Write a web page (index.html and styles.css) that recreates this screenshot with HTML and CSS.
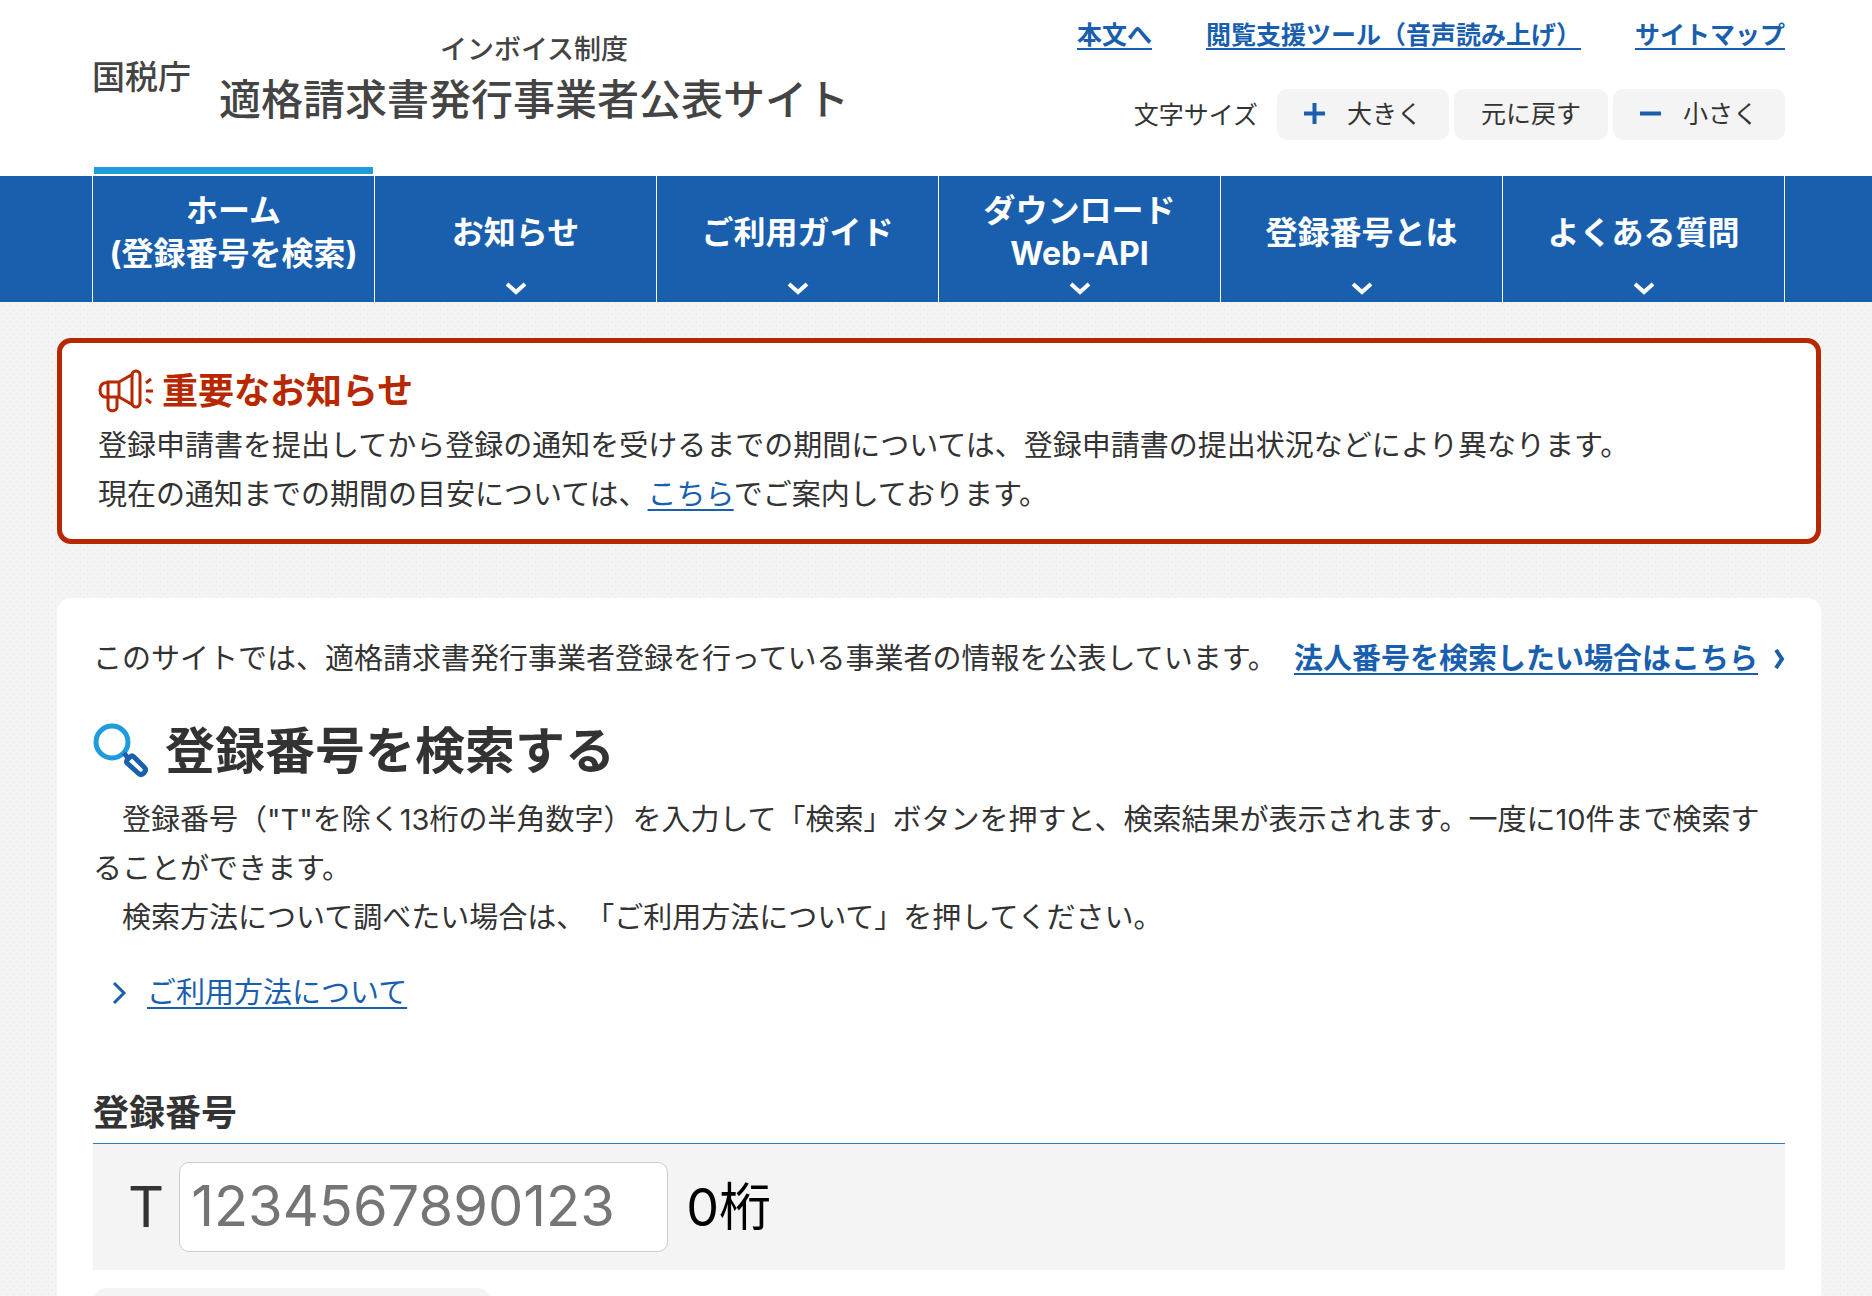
FILE: index.html
```html
<!DOCTYPE html>
<html lang="ja">
<head>
  <meta charset="UTF-8" />
  <title>国税庁インボイス制度適格請求書発行事業者公表サイト</title>
  <link rel="stylesheet" href="styles.css">
</head>
<body>
  <header class="header inner">
    <div class="logo">
      <span class="logo-agency">国税庁</span>
      <h1 class="logo-title"><span class="logo-sub">インボイス制度</span>適格請求書発行事業者公表サイト</h1>
    </div>
    <div class="header-tools">
      <div class="header-links">
        <a href="#main">本文へ</a>
        <a href="#">閲覧支援ツール（音声読み上げ）</a>
        <a href="#">サイトマップ</a>
      </div>
      <div class="font-size">
        <span class="font-size-label">文字サイズ</span>
        <button type="button"><svg width="21" height="21" viewBox="0 0 21 21"><path d="M0 10.5h21M10.5 0v21" /></svg>大きく</button>
        <button type="button">元に戻す</button>
        <button type="button"><svg width="21" height="21" viewBox="0 0 21 21"><path d="M0 10.5h21" /></svg>小さく</button>
      </div>
    </div>
  </header>

  <nav class="gnav">
    <ul class="gnav-list">
      <li class="current"><a href="#">ホーム<br>(登録番号を検索)</a></li>
      <li><a href="#">お知らせ<svg class="arrow" width="22" height="14" viewBox="0 0 22 14"><path d="M2 2l9 8 9-8" /></svg></a></li>
      <li><a href="#">ご利用ガイド<svg class="arrow" width="22" height="14" viewBox="0 0 22 14"><path d="M2 2l9 8 9-8" /></svg></a></li>
      <li><a href="#">ダウンロード<br>Web-API<svg class="arrow" width="22" height="14" viewBox="0 0 22 14"><path d="M2 2l9 8 9-8" /></svg></a></li>
      <li><a href="#">登録番号とは<svg class="arrow" width="22" height="14" viewBox="0 0 22 14"><path d="M2 2l9 8 9-8" /></svg></a></li>
      <li><a href="#">よくある質問<svg class="arrow" width="22" height="14" viewBox="0 0 22 14"><path d="M2 2l9 8 9-8" /></svg></a></li>
    </ul>
  </nav>

  <main id="main" class="main">
    <section class="notice">
      <h2 class="notice-title">
        <svg width="56" height="44" viewBox="0 0 56 44">
          <path d="M10 13H21V28H10zM10 14C4 13 2 17 2 21s2 8 8 7M21 13L35 5M21 28L35 36M10 28V38c0 5 9 5 9 0V28" />
          <rect x="34" y="2" width="8" height="36" rx="4" />
          <path d="M48 14l5-4M48 22h7M48 30l5 4" />
        </svg>
        重要なお知らせ
      </h2>
      <p>登録申請書を提出してから登録の通知を受けるまでの期間については、登録申請書の提出状況などにより異なります。<br>
      現在の通知までの期間の目安については、<a href="#">こちら</a>でご案内しております。</p>
    </section>

    <section class="card">
      <div class="intro">
        <p>このサイトでは、適格請求書発行事業者登録を行っている事業者の情報を公表しています。</p>
        <div class="intro-link">
          <a href="#">法人番号を検索したい場合はこちら</a>
          <svg width="11" height="20" viewBox="0 0 11 20"><path d="M2 1l6 9-6 9" /></svg>
        </div>
      </div>

      <h2 class="search-title">
        <svg width="56" height="56" viewBox="0 0 56 56">
          <circle class="lens" cx="19" cy="19" r="16" />
          <path class="handle" d="M31 30l4 5M34 37l3-3q2-2 4 0l10 10q3 3 0 6t-6 0L34 40q-1-1 0-3z" />
        </svg>
        登録番号を検索する
      </h2>
      <p>　登録番号（"T"を除く13桁の半角数字）を入力して「検索」ボタンを押すと、検索結果が表示されます。一度に10件まで検索することができます。<br>
      　検索方法について調べたい場合は、「ご利用方法について」を押してください。</p>

      <div class="usage">
        <svg width="15" height="22" viewBox="0 0 15 22"><path d="M2 1l10 10L2 21" /></svg>
        <a href="#">ご利用方法について</a>
      </div>

      <form class="search-form">
        <label class="form-title" for="number">登録番号</label>
        <div class="form-row">
          <span>T</span>
          <input type="text" id="number" placeholder="1234567890123" maxlength="13">
          <span class="count">0桁</span>
        </div>
        <button type="button" class="form-button"></button>
      </form>
    </section>
  </main>
</body>
</html>
```
FILE: styles.css
```css
* {
  box-sizing: border-box;
}
body {
  margin: 0;
  height: 100vh;
  overflow: hidden;
  background: #fff;
  color: #333;
  font-family: Inter, "Noto Sans CJK JP", sans-serif;
  font-size: 29px;
  line-height: 49px;
  text-spacing-trim: space-all;
}
h1, h2, p, ul {
  margin: 0;
  padding: 0;
}
a {
  color: #1a5fae;
  text-decoration-thickness: 2px;
  text-underline-offset: 4px;
}
svg {
  flex: none;
  fill: none;
  stroke: #1a5fae;
  stroke-width: 3;
}

/* ヘッダー */
.header {
  display: flex;
  justify-content: space-between;
  margin: 0 87px 0 92px;
  height: 176px;
}
.logo {
  display: flex;
  align-items: flex-start;
  gap: 28px;
  padding-top: 30px;
  color: #444;
}
.logo-agency {
  padding-top: 23px;
  font-size: 33px;
  font-weight: 500;
}
.logo-title {
  font-size: 42px;
  font-weight: 500;
  line-height: 60px;
}
.logo-sub {
  display: block;
  font-size: 27px;
  line-height: 40px;
  text-align: center;
}
.header-tools {
  padding-top: 15px;
  font-size: 25px;
  line-height: 40px;
}
.header-links {
  display: flex;
  justify-content: flex-end;
  gap: 54px;
  font-weight: bold;
}
.font-size {
  display: flex;
  justify-content: flex-end;
  align-items: center;
  gap: 5px;
  margin-top: 34px;
}
.font-size-label {
  margin-right: 14px;
}
.font-size button {
  display: flex;
  align-items: center;
  gap: 22px;
  height: 51px;
  padding: 0 27px 2px;
  border: 0;
  border-radius: 10px;
  background: #f4f4f4;
  color: #333;
  font: inherit;
}
.font-size svg {
  stroke-width: 4;
}

/* グローバルナビ */
.gnav {
  padding: 0 87px 0 92px;
  background: #1a5fae;
}
.gnav-list {
  display: grid;
  grid-template-columns: repeat(6, 1fr);
  border-left: 1px solid #fff;
  list-style: none;
}
.gnav-list li {
  position: relative;
  border-right: 1px solid #fff;
}
.gnav-list .current::before {
  content: "";
  position: absolute;
  top: -9px;
  left: 1px;
  right: 1px;
  height: 7px;
  background: #1f9bdc;
}
.gnav-list a {
  display: flex;
  flex-direction: column;
  justify-content: center;
  height: 126px;
  padding-bottom: 14px;
  color: #fff;
  font-size: 32px;
  font-weight: bold;
  line-height: 43px;
  text-align: center;
  text-decoration: none;
  white-space: nowrap;
}
.arrow {
  position: absolute;
  left: 50%;
  bottom: 6px;
  margin-left: -11px;
  stroke: #fff;
  stroke-width: 4;
}

/* メイン */
.main {
  padding: 36px 51px 0 57px;
  background-color: #f4f4f4;
  background-image: radial-gradient(#ebebeb 1px, transparent 1px), radial-gradient(#ebebeb 1px, transparent 1px);
  background-position: 0 0, 3px 4px;
  background-size: 7px 8px;
}
.notice {
  margin-bottom: 54px;
  padding: 21px 36px 20px;
  border: 5px solid #b82800;
  border-radius: 14px;
  background: #fff;
}
.notice-title {
  display: flex;
  align-items: center;
  gap: 8px;
  margin-bottom: 3px;
  color: #b82800;
  font-size: 36px;
  line-height: 54px;
}
.notice-title svg {
  stroke: #b82800;
}
.card {
  padding: 36px;
  border-radius: 14px 14px 0 0;
  background: #fff;
}
.intro {
  display: flex;
  justify-content: space-between;
}
.intro-link {
  display: flex;
  align-items: center;
  gap: 16px;
  font-weight: bold;
}
.intro-link svg {
  stroke-width: 4;
}
.search-title {
  display: flex;
  align-items: center;
  gap: 16px;
  margin: 28px 0 4px;
  font-size: 50px;
  line-height: 80px;
}
.search-title .lens {
  stroke: #1f9bdc;
  stroke-width: 5;
}
.search-title .handle {
  stroke-width: 5;
}
.usage {
  display: flex;
  align-items: center;
  gap: 20px;
  margin: 26px 0 0 19px;
}
.form-title {
  display: block;
  margin-top: 67px;
  border-bottom: 1px solid #2480be;
  font-size: 36px;
  font-weight: bold;
  line-height: 59px;
}
.form-row {
  display: flex;
  align-items: center;
  padding: 18px 35px;
  background: #f4f4f4;
  font-size: 56px;
}
.form-row input {
  width: 489px;
  height: 90px;
  margin: 0 18px 0 15px;
  padding: 0 11px 2px;
  border: 1px solid #ccc;
  border-radius: 10px;
  background: #fff;
  font: inherit;
}
.form-row input::placeholder {
  color: #757575;
}
.count {
  color: #000;
  font-size: 52px;
}
.form-button {
  width: 398px;
  height: 72px;
  margin-top: 18px;
  border: 0;
  border-radius: 14px;
  background: #f4f4f4;
}
```
